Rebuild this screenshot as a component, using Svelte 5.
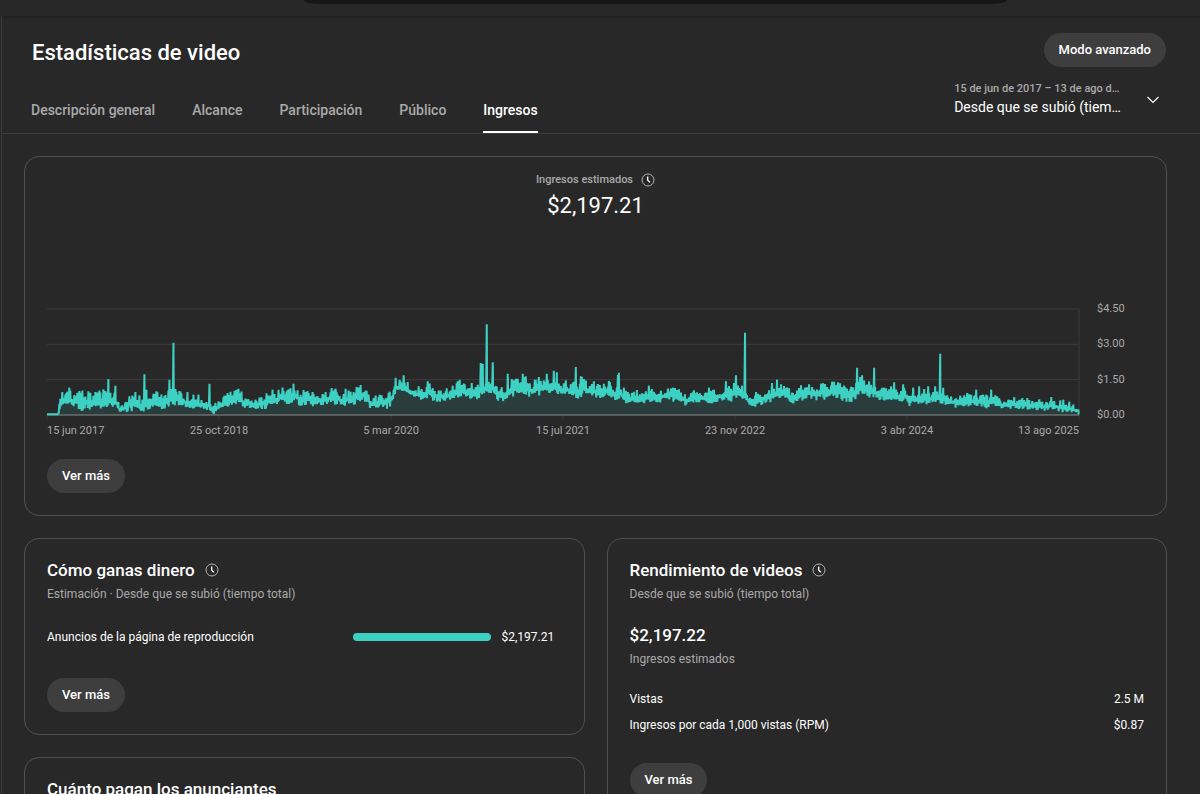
<script>
  const tabs = ['Descripción general', 'Alcance', 'Participación', 'Público', 'Ingresos'];
  let active = $state('Ingresos');

  const dates = ['15 jun 2017', '25 oct 2018', '5 mar 2020', '15 jul 2021', '23 nov 2022', '3 abr 2024', '13 ago 2025'];
  const amounts = ['$4.50', '$3.00', '$1.50', '$0.00'];
  const totals = [
    ['Vistas', '2.5 M'],
    ['Ingresos por cada 1,000 vistas (RPM)', '$0.87']
  ];

  // Plot units: 3093 wide, 318 tall, $4.50 at y = 0 and $0.00 at y = 318.
  const W = 3093;
  const H = 318;
  const TOP = 26;

  // Each period holds the daily band as [x, high, low] and single-day peaks as [x, y].
  const periods = [
    {
      start: -21,
      band: [[55, 335, 343], [60, 298, 322], [70, 285, 315], [100, 284, 318], [120, 284, 325], [160, 286, 325], [190, 284, 320], [228, 284, 318], [232, 308, 328], [240, 320, 336], [252, 314, 336], [266, 292, 328], [285, 300, 328], [300, 297, 330], [325, 300, 326], [350, 282, 322], [372, 296, 322], [388, 280, 318], [410, 278, 312], [430, 288, 312], [440, 302, 325], [470, 304, 324], [505, 308, 326], [515, 316, 340], [530, 314, 334], [545, 300, 326], [560, 292, 322], [575, 276, 312], [600, 276, 304], [610, 294, 320], [650, 302, 324], [680, 290, 320], [705, 288, 316], [720, 274, 308], [745, 276, 310], [762, 266, 304], [780, 280, 312]],
      peaks: [[69, 275], [88, 262], [124, 277], [170, 278], [190, 267], [206, 236], [228, 256], [270, 288], [287, 275], [298, 285], [314, 222], [320, 268], [352, 276], [390, 238], [396, 266], [401, 127], [407, 266], [418, 272], [443, 275], [461, 283], [476, 283], [510, 250], [555, 286], [592, 268], [697, 268], [752, 264], [762, 250], [772, 270]]
    },
    {
      start: 759,
      band: [[2, 282, 310], [20, 280, 312], [50, 290, 316], [75, 284, 312], [95, 272, 306], [125, 286, 312], [155, 280, 312], [180, 266, 300], [203, 275, 306], [208, 298, 322], [235, 294, 320], [260, 290, 320], [277, 276, 306], [283, 242, 280], [310, 244, 276], [325, 256, 284], [342, 276, 292], [358, 264, 296], [370, 276, 302], [385, 258, 290], [400, 276, 300], [440, 276, 300], [460, 268, 298], [480, 246, 282], [500, 264, 288], [530, 266, 298], [545, 250, 280], [580, 252, 276], [588, 270, 300], [612, 270, 298], [640, 244, 284], [670, 242, 276], [695, 250, 292], [715, 248, 280], [750, 248, 276], [778, 252, 278]],
      peaks: [[22, 272], [95, 263], [108, 265], [138, 265], [175, 262], [180, 261], [288, 232], [311, 225], [323, 245], [355, 258], [383, 243], [440, 264], [459, 256], [480, 238], [515, 248], [541, 188], [549, 190], [559, 72], [567, 244], [579, 186], [623, 220], [634, 236], [669, 220], [676, 228], [704, 238], [715, 230], [740, 220], [762, 211], [770, 216]]
    },
    {
      start: 1539,
      band: [[0, 256, 282], [30, 254, 284], [52, 254, 292], [66, 240, 282], [85, 254, 288], [120, 262, 292], [148, 250, 284], [156, 270, 298], [178, 262, 290], [186, 272, 302], [205, 282, 306], [245, 284, 308], [268, 272, 300], [286, 288, 310], [305, 276, 300], [330, 268, 300], [352, 276, 302], [378, 288, 314], [405, 280, 304], [446, 280, 306], [480, 276, 300], [498, 264, 294], [512, 268, 300], [528, 256, 290], [540, 272, 298], [557, 266, 298], [564, 298, 316], [576, 302, 320], [592, 286, 312], [620, 280, 306], [650, 266, 290], [675, 268, 298], [695, 280, 306], [725, 268, 296], [745, 264, 290], [765, 270, 298], [778, 264, 290]],
      peaks: [[18, 240], [48, 200], [62, 228], [70, 236], [102, 243], [147, 242], [172, 224], [177, 217], [190, 262], [230, 269], [266, 256], [276, 266], [324, 265], [337, 262], [402, 270], [446, 262], [460, 268], [498, 243], [520, 248], [528, 225], [545, 256], [555, 97], [588, 275], [634, 248], [650, 238], [662, 252], [686, 264], [722, 255], [745, 252], [756, 260]]
    },
    {
      start: 2319,
      band: [[0, 258, 288], [20, 264, 298], [42, 250, 286], [66, 266, 300], [85, 264, 300], [102, 264, 302], [112, 254, 280], [128, 250, 280], [140, 262, 288], [162, 260, 286], [168, 270, 294], [200, 272, 302], [235, 278, 300], [254, 270, 300], [260, 288, 314], [285, 286, 308], [320, 284, 308], [360, 280, 306], [376, 292, 312], [400, 294, 318], [440, 290, 314], [470, 288, 314], [498, 290, 320], [515, 286, 308], [540, 302, 325], [575, 306, 322], [615, 304, 324], [645, 310, 328], [690, 306, 328], [720, 312, 332], [750, 316, 334], [766, 324, 336], [774, 326, 342]],
      peaks: [[2, 250], [20, 260], [41, 244], [52, 246], [110, 202], [119, 230], [126, 225], [147, 243], [160, 202], [192, 262], [211, 258], [221, 246], [248, 252], [278, 262], [297, 258], [310, 266], [324, 258], [343, 258], [360, 160], [369, 262], [431, 285], [441, 278], [466, 268], [481, 284], [498, 283], [511, 268], [535, 294], [580, 290], [606, 293], [620, 293], [655, 297], [692, 290], [700, 302], [720, 300], [727, 298], [745, 304], [759, 313]]
    }
  ];

  // Small seeded generator, so the daily variation is the same on every render.
  let seed = 20170615;
  function random() {
    seed = (seed * 1664525 + 1013904223) % 4294967296;
    return seed / 4294967296;
  }

  const band = periods.flatMap((p) => p.band.map(([x, hi, lo]) => [x + p.start, hi - TOP, lo - TOP]));
  const peaks = periods.flatMap((p) => p.peaks.map(([x, y]) => [x + p.start, y - TOP]));

  function buildLine() {
    const points = [[0, H - 1], [33, H - 1]];
    let k = 0;
    for (let x = band[0][0]; x < band[band.length - 1][0]; x += 3) {
      while (k < band.length - 2 && x >= band[k + 1][0]) k++;
      const [x0, hi0, lo0] = band[k];
      const [x1, hi1, lo1] = band[k + 1];
      const t = (x - x0) / (x1 - x0);
      const hi = hi0 + (hi1 - hi0) * t;
      const lo = lo0 + (lo1 - lo0) * t;
      const spread = lo - hi;
      const peak = peaks.find(([px]) => px >= x && px < x + 3);
      points.push([x, peak ? peak[1] : hi + (0.45 - random() ** 1.4 * 0.85) * spread]);
      points.push([x + 1, lo + (random() ** 2 * 0.55 - 0.38) * spread]);
    }
    points.push([W - 2, H - 2]);
    return points.map(([x, y]) => `${x.toFixed(1)},${Math.min(y, H - 2).toFixed(1)}`).join(' ');
  }

  const line = buildLine();
</script>

{#snippet clock()}
  <svg class="clock" viewBox="0 0 14 14" aria-hidden="true">
    <circle cx="7" cy="7" r="6" fill="none" stroke="currentColor" stroke-width="1" />
    <path d="M6.7 3.5V7.2L9 9.4" fill="none" stroke="#fff" stroke-width="1.3" />
  </svg>
{/snippet}

<div class="page">
  <div class="topbar"><div class="search"></div></div>

  <div class="content">
    <header>
      <div class="lead">
        <h1>Estadísticas de video</h1>
        <nav role="tablist" aria-label="Estadísticas">
          {#each tabs as tab}
            <button
              class="tab"
              class:active={tab === active}
              role="tab"
              aria-selected={tab === active}
              onclick={() => (active = tab)}>{tab}</button>
          {/each}
        </nav>
      </div>
      <div class="tools">
        <button class="pill">Modo avanzado</button>
        <button class="period" aria-haspopup="listbox">
          <span class="period-text">
            <span class="range">15 de jun de 2017 – 13 de ago d…</span>
            <span class="name">Desde que se subió (tiem…</span>
          </span>
          <svg class="chevron" viewBox="0 0 14 14" aria-hidden="true">
            <path d="M1.5 4L7 9.5L12.5 4" fill="none" stroke="currentColor" stroke-width="1.1" />
          </svg>
        </button>
      </div>
    </header>

    <main>
      <section class="card revenue">
        <div class="caption"><span>Ingresos estimados</span>{@render clock()}</div>
        <div class="total">$2,197.21</div>

        <div class="chart">
          <svg class="plot" viewBox="0 0 {W} {H}" preserveAspectRatio="none" role="img" aria-label="Ingresos estimados">
            {#each [0, 106, 212] as y}
              <line class="grid" x1="0" x2={W} y1={y} y2={y} />
            {/each}
            {#each dates as _, i}
              <line class="grid" x1={(W * i) / 6} x2={(W * i) / 6} y1={H} y2={H + 14} />
            {/each}
            <line class="grid" x1={W} x2={W} y1="0" y2={H} />
            <polygon class="area" points="0,{H} {line} {W},{H}" />
            <line class="base" x1="0" x2={W} y1={H} y2={H} />
            <polyline class="series" points={line} />
          </svg>
          <div class="amounts">
            {#each amounts as amount}<span>{amount}</span>{/each}
          </div>
          <div class="dates">
            {#each dates as date}<span>{date}</span>{/each}
          </div>
        </div>

        <button class="pill">Ver más</button>
      </section>

      <div class="columns">
        <div class="column">
          <section class="card">
            <h2>Cómo ganas dinero {@render clock()}</h2>
            <p class="sub">Estimación · Desde que se subió (tiempo total)</p>
            <div class="source">
              <span>Anuncios de la página de reproducción</span>
              <span class="bar"></span>
              <span class="amount">$2,197.21</span>
            </div>
            <button class="pill">Ver más</button>
          </section>
          <section class="card">
            <h2>Cuánto pagan los anunciantes</h2>
          </section>
        </div>

        <section class="card">
          <h2>Rendimiento de videos {@render clock()}</h2>
          <p class="sub">Desde que se subió (tiempo total)</p>
          <div class="metric">$2,197.22</div>
          <p class="sub">Ingresos estimados</p>
          <table>
            <tbody>
              {#each totals as [label, value]}
                <tr><th scope="row">{label}</th><td>{value}</td></tr>
              {/each}
            </tbody>
          </table>
          <button class="pill">Ver más</button>
        </section>
      </div>
    </main>
  </div>
</div>

<style>
  :global(body) {
    background: #282828;
  }

  .page {
    display: flex;
    flex-direction: column;
    height: 100vh;
    background: #282828;
    color: #fff;
    font-family: Roboto, sans-serif;
    font-size: 12px;
    line-height: 20px;
  }

  .topbar {
    flex: none;
    height: 16px;
    box-shadow: 0 1px 3px rgba(0, 0, 0, 0.3);
  }

  .search {
    width: 58.6%;
    height: 4px;
    margin-left: 25.3%;
    border-radius: 0 0 16px 16px / 0 0 4px 4px;
    background: #161616;
  }

  .content {
    flex: 1;
    min-height: 0;
    margin-left: 1px;
    border-left: 1px solid #3a3a3a;
    overflow-y: auto;
    scrollbar-width: none;
  }

  header {
    display: flex;
    justify-content: space-between;
    padding: 17px 34px 0 29px;
    border-bottom: 1px solid #3c3c3c;
  }

  h1,
  h2,
  p {
    margin: 0;
  }

  h1 {
    padding: 4px 0 0 1px;
    font-size: 22px;
    font-weight: 500;
    line-height: 32px;
  }

  nav {
    display: flex;
    gap: 37px;
    margin-top: 20px;
  }

  button {
    border: 0;
    background: none;
    color: inherit;
    font: inherit;
    cursor: pointer;
  }

  .tab {
    height: 44px;
    padding: 0;
    border-bottom: 2px solid transparent;
    color: #aaa;
    font-size: 14px;
    font-weight: 500;
  }

  .tab.active {
    border-color: #fff;
    color: #fff;
  }

  .tools {
    display: flex;
    flex-direction: column;
    align-items: flex-end;
    gap: 13px;
  }

  .pill {
    height: 34px;
    padding: 0 15px;
    border-radius: 17px;
    background: #3e3e3e;
    font-size: 13px;
    font-weight: 500;
  }

  .period {
    display: flex;
    align-items: center;
    justify-content: space-between;
    gap: 25px;
    padding: 0 6px 0 0;
    text-align: left;
  }

  .period-text {
    display: flex;
    flex-direction: column;
  }

  .range {
    color: #aaa;
    font-size: 11px;
    font-weight: 500;
    line-height: 18px;
  }

  .name {
    font-size: 14px;
    line-height: 18px;
  }

  .chevron {
    width: 14px;
    height: 14px;
    margin-top: 4px;
  }

  main {
    display: flex;
    flex-direction: column;
    gap: 22px;
    padding: 22px 33px 22px 22px;
  }

  .card {
    padding: 20px 22px 22px;
    border: 1px solid #505050;
    border-radius: 15px;
  }

  .revenue {
    padding: 14px 22px 22px;
  }

  .clock {
    width: 14px;
    height: 14px;
    color: #b4b4b4;
  }

  .caption {
    display: flex;
    align-items: center;
    justify-content: center;
    gap: 8px;
    height: 18px;
    color: #aaa;
    font-size: 11px;
    font-weight: 500;
  }

  .total {
    font-size: 22px;
    line-height: 34px;
    text-align: center;
  }

  .chart {
    display: grid;
    grid-template-columns: minmax(0, 1fr) 47px;
    column-gap: 18px;
    margin: 86px 0 20px;
    color: #aaa;
    font-size: 11px;
    line-height: 16px;
  }

  .plot {
    width: 100%;
    height: 106px;
    overflow: visible;
  }

  .plot * {
    vector-effect: non-scaling-stroke;
  }

  .grid {
    stroke: #3c3c3c;
    stroke-width: 1px;
  }

  .base {
    stroke: #8a8a8a;
    stroke-width: 1px;
  }

  .area {
    fill: #3dd1c3;
    fill-opacity: 0.12;
  }

  .series {
    fill: none;
    stroke: #3dd1c3;
    stroke-width: 2px;
    stroke-linejoin: bevel;
  }

  .amounts {
    display: flex;
    flex-direction: column;
    justify-content: space-between;
    margin: -8px 0;
  }

  .dates {
    display: grid;
    grid-template-columns: repeat(12, minmax(0, 1fr));
    margin-top: 8px;
    text-align: center;
    white-space: nowrap;
  }

  .dates span {
    grid-column: span 2;
  }

  .dates span:first-child {
    grid-column: span 1;
    text-align: left;
  }

  .dates span:last-child {
    display: flex;
    grid-column: span 1;
    justify-content: flex-end;
  }

  .columns {
    display: grid;
    grid-template-columns: repeat(2, minmax(0, 1fr));
    align-items: start;
    gap: 22px;
  }

  .column {
    display: flex;
    flex-direction: column;
    gap: 22px;
  }

  h2 {
    display: flex;
    align-items: center;
    gap: 10px;
    font-size: 17px;
    font-weight: 500;
    line-height: 22px;
  }

  .sub {
    margin-top: 2px;
    color: #aaa;
    line-height: 22px;
  }

  .source {
    display: grid;
    grid-template-columns: 60% minmax(0, 1fr) 67px;
    align-items: center;
    margin: 22px 0 31px;
    padding-right: 4px;
  }

  .bar {
    height: 8px;
    border-radius: 4px;
    background: #3dd1c3;
  }

  .amount {
    padding-left: 11px;
  }

  .metric {
    margin-top: 19px;
    font-size: 17px;
    font-weight: 500;
    line-height: 22px;
  }

  table {
    width: 100%;
    margin: 16px 0 25px;
    border-collapse: collapse;
  }

  th,
  td {
    height: 26px;
    padding: 0;
    font-weight: 400;
    text-align: left;
  }

  td {
    text-align: right;
  }
</style>
